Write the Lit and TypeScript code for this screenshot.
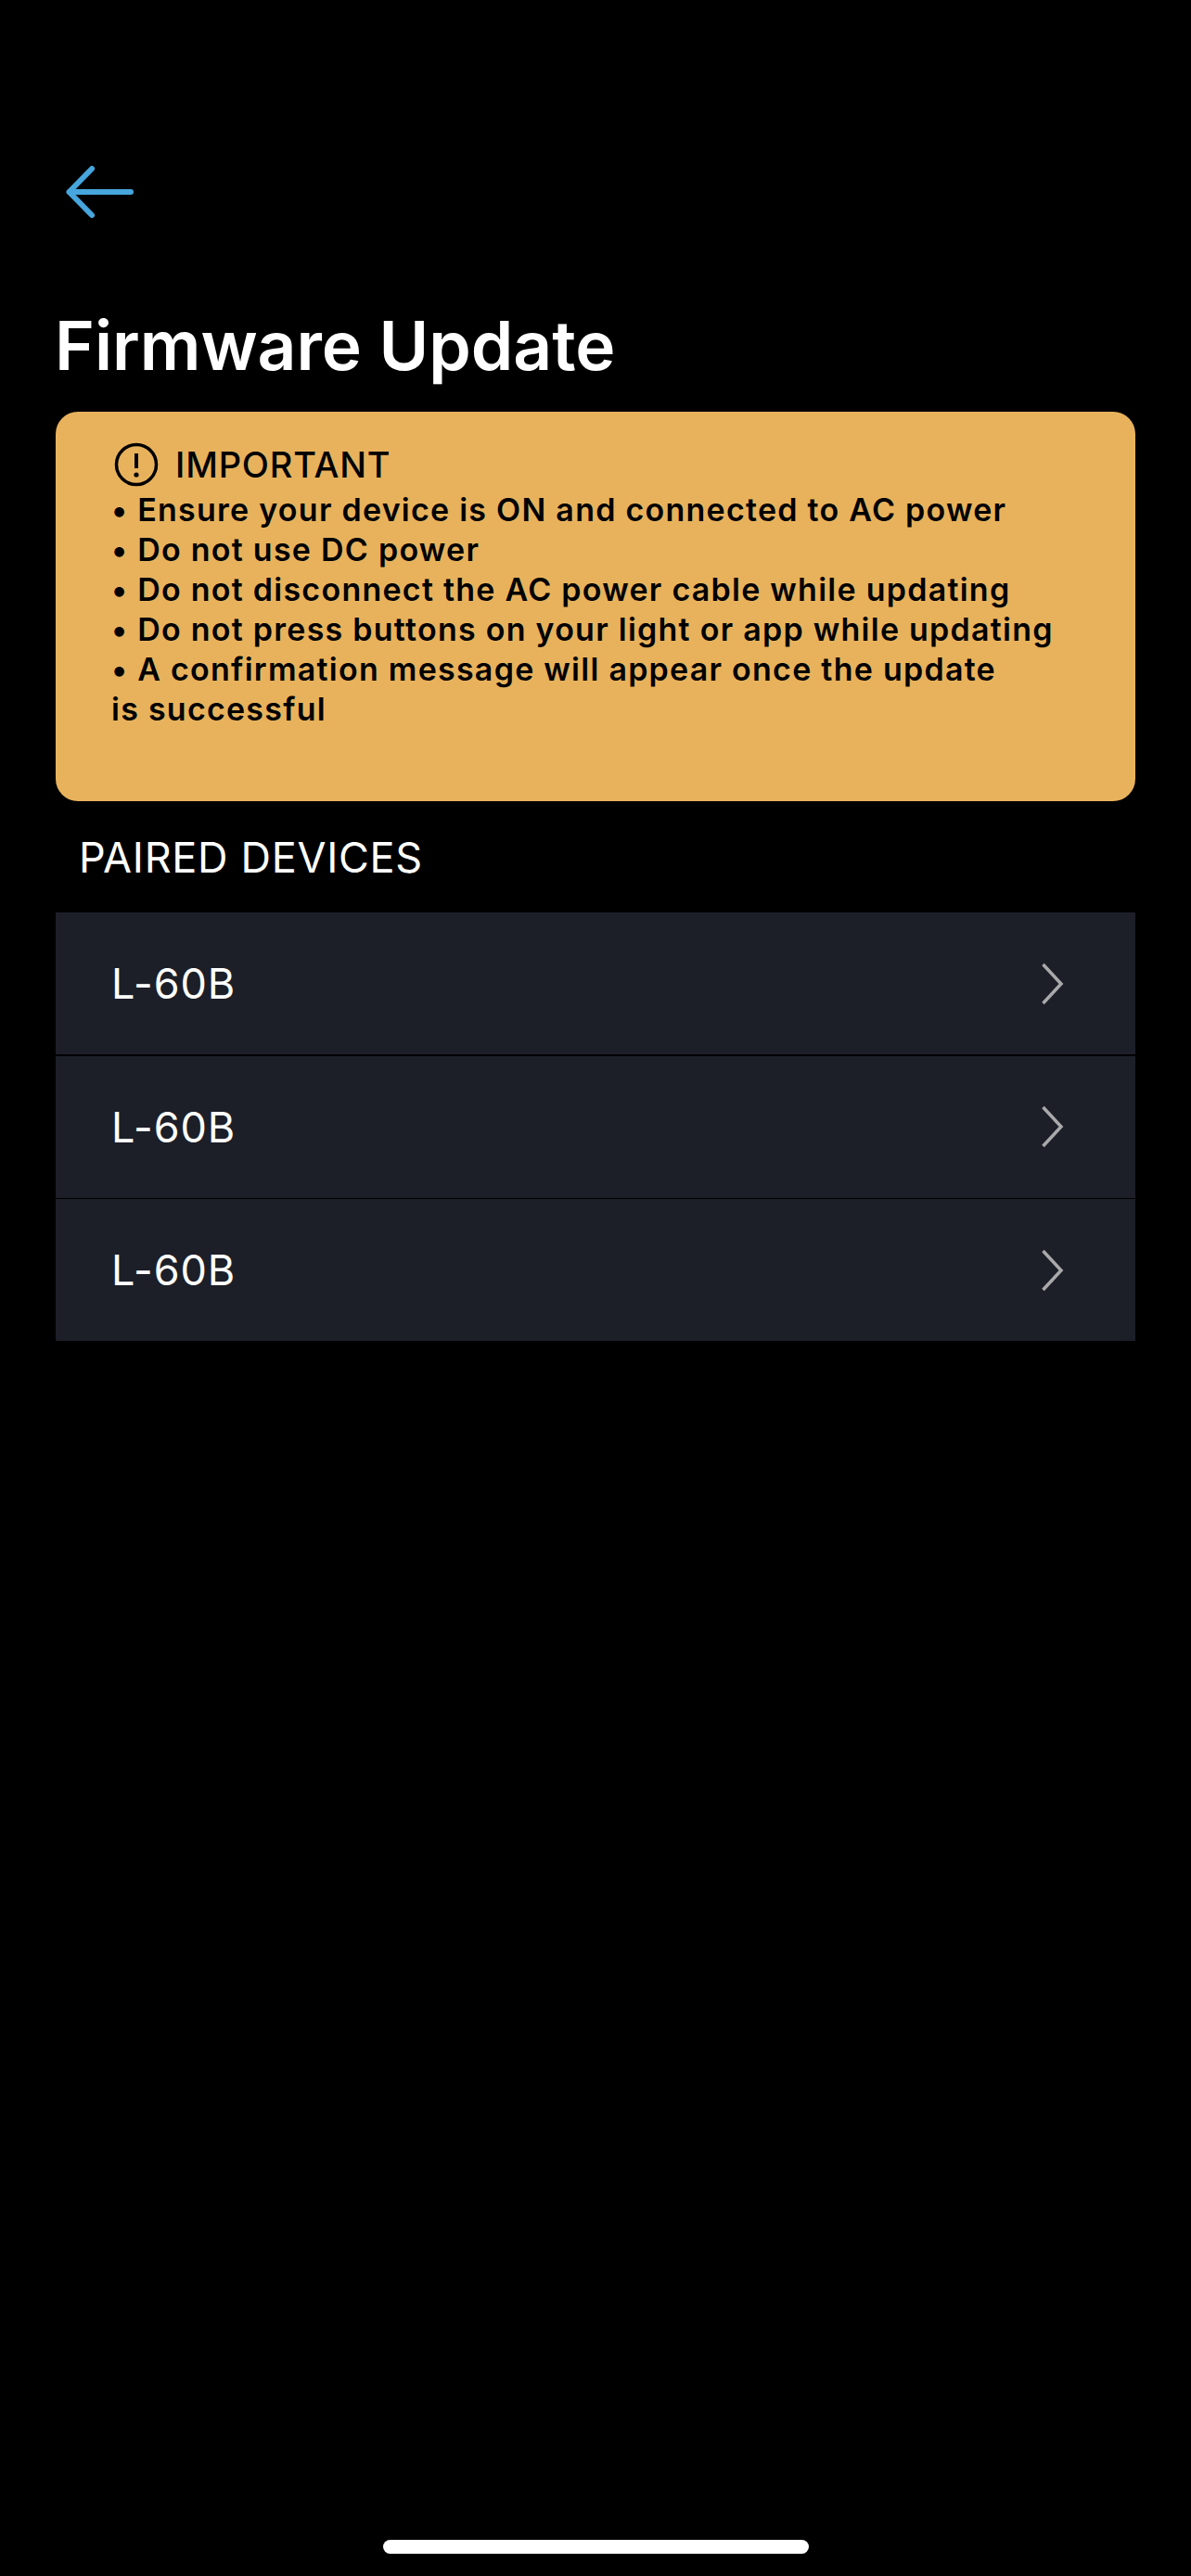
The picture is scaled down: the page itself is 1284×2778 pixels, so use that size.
import { LitElement, html, css } from "lit";
import { customElement } from "lit/decorators.js";

const LINES = [
  "• Ensure your device is ON and connected to AC power",
  "• Do not use DC power",
  "• Do not disconnect the AC power cable while updating",
  "• Do not press buttons on your light or app while updating",
  "• A confirmation message will appear once the update",
  "is successful",
];

@customElement("app-root")
export class AppRoot extends LitElement {
  static styles = css`
    :host { display: block; width: 1284px; height: 2778px; background: #000; font-family: Inter, "Liberation Sans", sans-serif; color: #fff; overflow: hidden; }
    .page { display: flex; flex-direction: column; height: 2778px; padding: 0 60px; box-sizing: border-box; }
    .back { display: block; flex: none; margin: 176px 0 0 8px; width: 78px; height: 62px; }
    .title { margin: 90.5px 0 0 -1px; font-size: 73px; line-height: 88px; font-weight: 600; white-space: nowrap; }
    .card { margin-top: 27.5px; height: 420px; box-sizing: border-box; background: #e8b25c; border-radius: 24px; padding: 33px 0 0 60px; color: #000; }
    .head { display: flex; align-items: center; gap: 18px; height: 47px; margin: 0 0 3.5px 3px; font-size: 38px; font-weight: 500; letter-spacing: 0.8px; white-space: nowrap; }
    .head svg { width: 48px; height: 48px; flex: none; }
    .line { font-size: 34px; line-height: 43px; font-weight: 600; letter-spacing: 1.25px; white-space: nowrap; }
    .label { margin: 38px 0 0 25px; font-size: 45px; line-height: 46px; letter-spacing: 0.7px; }
    .list { margin-top: 36px; display: flex; flex-direction: column; gap: 1.5px; }
    .row { height: 153px; background: #1c1f28; display: flex; align-items: center; justify-content: space-between; padding: 0 77px 0 60px; font-size: 45px; letter-spacing: 0.9px; }
    .row svg { width: 26px; height: 46px; }
    .spacer { flex: 1; }
    .home { align-self: center; width: 459px; height: 15px; border-radius: 8px; background: #fff; margin-bottom: 24px; }
  `;

  render() {
    return html`<div class="page">
      <svg class="back" viewBox="0 0 78 62" fill="none" stroke="#46a6dd" stroke-width="6" stroke-linecap="round" stroke-linejoin="round">
        <path d="M6.5 31H73M31 6L6.5 31L31 56"/>
      </svg>
      <h1 class="title">Firmware Update</h1>
      <div class="card">
        <div class="head">
          <svg viewBox="0 0 48 48" fill="none" stroke="#000" stroke-width="3.5">
            <circle cx="24" cy="24" r="21.5"/>
            <path d="M24 12V28" stroke-width="4"/>
            <circle cx="24" cy="35" r="2.6" fill="#000" stroke="none"/>
          </svg>
          <span>IMPORTANT</span>
        </div>
        ${LINES.map((l) => html`<div class="line">${l}</div>`)}
      </div>
      <div class="label">PAIRED DEVICES</div>
      <div class="list">
        ${[0, 1, 2].map(() => html`<div class="row"><span>L-60B</span>
          <svg viewBox="0 0 26 46" fill="none" stroke="#a9a9ab" stroke-width="3.5"><path d="M3.5 2L23 23L3.5 44"/></svg>
        </div>`)}
      </div>
      <div class="spacer"></div>
      <div class="home"></div>
    </div>`;
  }
}
